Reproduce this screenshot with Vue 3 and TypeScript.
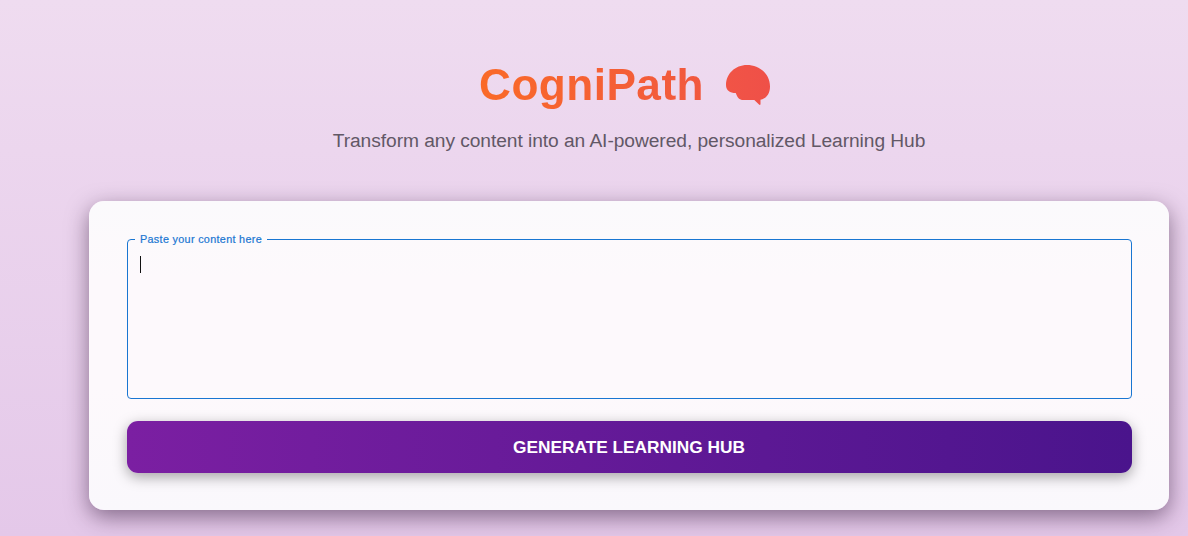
<template>
  <main class="page">
    <header class="hero">
      <h1 class="title">
        <span class="title-text">CogniPath</span>
        <svg class="title-icon" viewBox="0 0 46 42" aria-hidden="true">
          <defs>
            <linearGradient id="brain" x1="0" y1="0" x2="1" y2="0">
              <stop offset="0" stop-color="#f15446" />
              <stop offset="1" stop-color="#ef5048" />
            </linearGradient>
          </defs>
          <path
            fill="url(#brain)"
            d="M22 1C34 1 45 9.500 45 22.500C45 29 42 34.500 35.500 35.700V40C35.500 41 34.700 41.200 34 40.500L29.300 36H18.500C14 36 12.500 33.500 10.700 29C5 29 1 26.500 1 21C1 10 10 1 22 1Z"
          />
        </svg>
      </h1>
      <p class="subtitle">Transform any content into an AI-powered, personalized Learning Hub</p>
    </header>

    <section class="card">
      <fieldset class="field">
        <legend class="field-label">Paste your content here</legend>
        <div ref="editorRef" class="field-input" contenteditable="true" @input="handleInput"></div>
        <span v-if="!content" class="caret"></span>
      </fieldset>
      <button class="generate" type="button" @click="focusEditor">Generate Learning Hub</button>
    </section>
  </main>
</template>

<script setup lang="ts">
import { ref } from 'vue'

const editorRef = ref<HTMLElement | null>(null)
const content = ref('')

const handleInput = (e: Event) => {
  content.value = (e.target as HTMLElement).innerText
}

const focusEditor = () => {
  if (!content.value) editorRef.value?.focus()
}
</script>

<style>
body {
  margin: 0;
}
</style>

<style scoped>
.page {
  box-sizing: border-box;
  height: 536px;
  padding: 58px 19px 0 89px;
  overflow: hidden;
  font-family: Arial, 'Liberation Sans', sans-serif;
  background: linear-gradient(180deg, #efdcf0 0%, #ecd6ee 28%, #e4c8e9 100%);
}

.hero {
  text-align: center;
}

.title {
  display: flex;
  justify-content: center;
  align-items: flex-start;
  gap: 21px;
  height: 54px;
  margin: 0;
  padding-right: 8px;
  font-size: 44.2px;
  line-height: 54px;
  font-weight: 700;
  letter-spacing: 0.45px;
}

.title-text {
  color: transparent;
  background: linear-gradient(90deg, #fa6a28, #f1583f);
  background-clip: text;
  -webkit-background-clip: text;
}

.title-icon {
  width: 46px;
  height: 42px;
  margin-top: 6px;
}

.subtitle {
  margin: 14px 0 0;
  font-size: 19.2px;
  line-height: 30px;
  letter-spacing: -0.06px;
  color: #625866;
}

.card {
  box-sizing: border-box;
  height: 309px;
  margin-top: 45px;
  padding: 31px 37px 0 38px;
  border-radius: 15px;
  background: linear-gradient(180deg, #fbfafc 0%, #fdf9fc 25%, #fdf9fc 60%, #faf8fc 100%);
  box-shadow: 0 7px 22px rgba(45, 20, 50, 0.52);
}

.field {
  box-sizing: border-box;
  position: relative;
  height: 167px;
  margin: 0;
  padding: 0;
  border: 1px solid #1976d2;
  border-radius: 4px;
}

.field-label {
  margin-left: 7px;
  padding: 0 5px;
  font-size: 10.8px;
  line-height: 15px;
  letter-spacing: 0.32px;
  color: #1976d2;
  -webkit-text-stroke: 0.2px #1976d2;
}

.field-input {
  height: 130px;
  padding: 7px 12px;
  font-size: 14.4px;
  line-height: 20px;
  outline: none;
}

.caret {
  position: absolute;
  top: 9px;
  left: 12px;
  width: 1px;
  height: 17px;
  background: #111;
}

.generate {
  display: block;
  width: 100%;
  height: 52px;
  margin-top: 22px;
  padding: 0 1px 0 0;
  border: 0;
  border-radius: 11px;
  font-family: inherit;
  font-size: 17.3px;
  font-weight: 700;
  text-transform: uppercase;
  color: #fff;
  background: linear-gradient(90deg, #7b1fa2, #4a148c);
  box-shadow: 0 4px 14px rgba(0, 0, 0, 0.35);
  cursor: pointer;
}
</style>
